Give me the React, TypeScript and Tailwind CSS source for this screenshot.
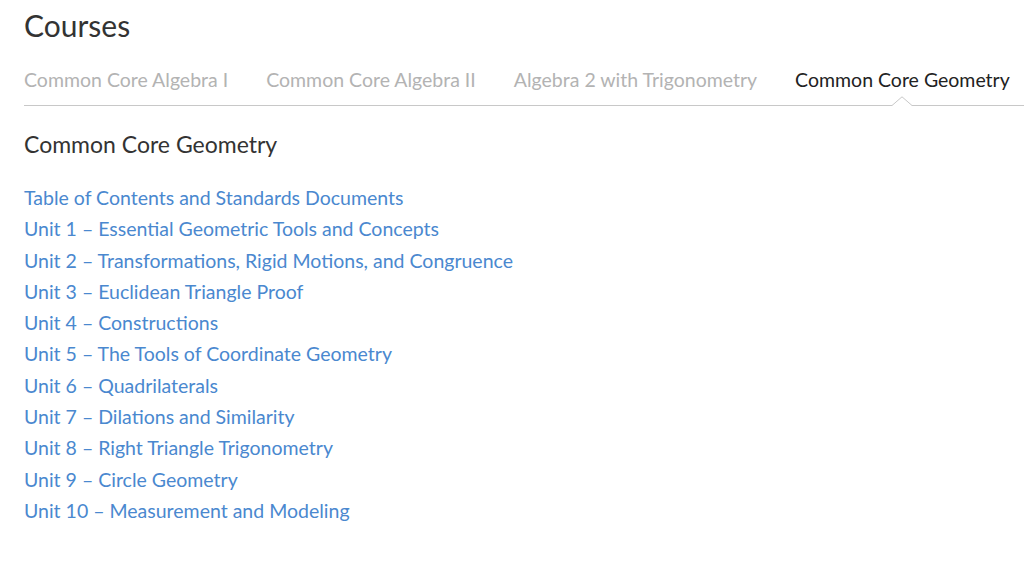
const tabs = [
  "Common Core Algebra I",
  "Common Core Algebra II",
  "Algebra 2 with Trigonometry",
  "Common Core Geometry",
];

const links = [
  "Table of Contents and Standards Documents",
  "Unit 1 – Essential Geometric Tools and Concepts",
  "Unit 2 – Transformations, Rigid Motions, and Congruence",
  "Unit 3 – Euclidean Triangle Proof",
  "Unit 4 – Constructions",
  "Unit 5 – The Tools of Coordinate Geometry",
  "Unit 6 – Quadrilaterals",
  "Unit 7 – Dilations and Similarity",
  "Unit 8 – Right Triangle Trigonometry",
  "Unit 9 – Circle Geometry",
  "Unit 10 – Measurement and Modeling",
];

const ACTIVE = 3;

export default function App() {
  return (
    <div className="min-h-[561px] bg-white pl-6 font-['Lato','Noto_Sans',sans-serif]">
      <h1 className="pt-[5px] text-[30px] leading-[40px] text-[#333]">Courses</h1>

      {/* タブ列。選択中のタブの下だけ線に切り欠き（上向きの三角）を入れる */}
      <div className="mt-[18px] flex gap-[38px] border-b border-[#c8c8c8]">
        {tabs.map((t, i) => (
          <div
            key={t}
            className={
              "relative whitespace-nowrap pt-[5px] pb-[13px] text-[19.5px] leading-[24px] " +
              (i === ACTIVE ? "text-[#222]" : "text-[#b3b3b3]")
            }
          >
            {t}
            {i === ACTIVE && (
              <svg
                className="absolute -bottom-px left-1/2 -translate-x-1/2"
                width="22"
                height="10"
                viewBox="0 0 22 10"
              >
                <path d="M0 9.5 H1 L11 0.8 L21 9.5 H22 V10 H0 Z" fill="#fff" />
                <path d="M0 9.5 H1 L11 0.8 L21 9.5 H22" fill="none" stroke="#c8c8c8" strokeWidth="1" />
              </svg>
            )}
          </div>
        ))}
      </div>

      <h2 className="mt-[24px] text-[23px] leading-[28px] text-[#333]">Common Core Geometry</h2>

      <ul className="mt-[24px]">
        {links.map((l) => (
          <li key={l} className="text-[19.5px] leading-[31.3px]">
            <a href="#" className="text-[#4a88cf]">
              {l}
            </a>
          </li>
        ))}
      </ul>
    </div>
  );
}
